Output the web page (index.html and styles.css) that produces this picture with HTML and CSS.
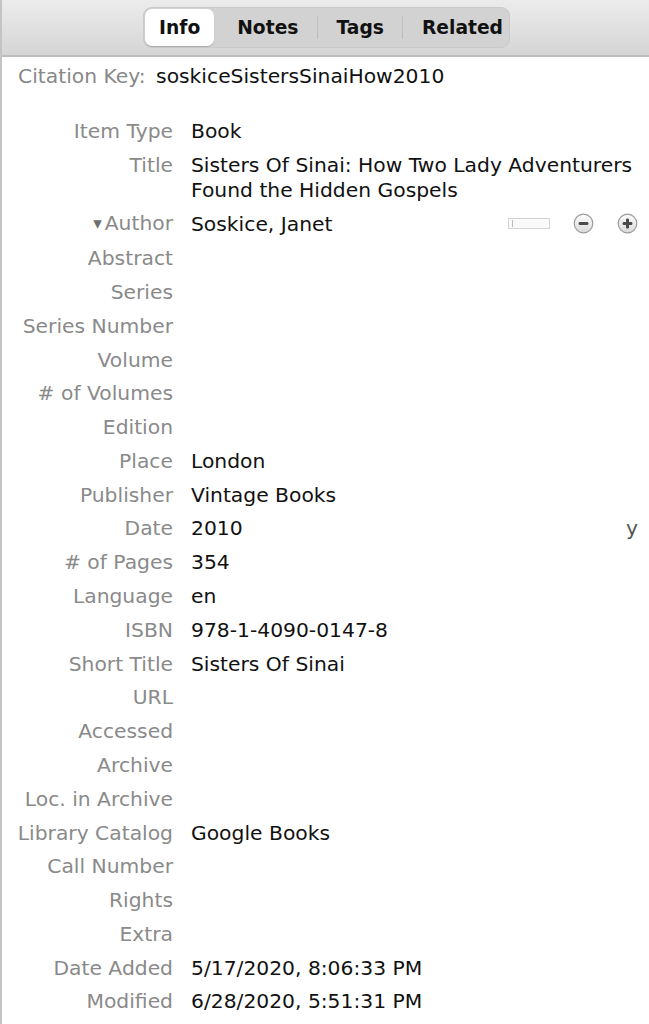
FILE: index.html
```html
<!DOCTYPE html>
<html lang="en">
<head>
    <meta charset="UTF-8">
    <title>Item Pane</title>
    <link rel="stylesheet" href="styles.css">
</head>
<body>
    <div class="pane">
        <div class="toolbar">
            <div class="tabs">
                <span class="tab active">Info</span>
                <span class="tab notes">Notes</span>
                <span class="sep"></span>
                <span class="tab">Tags</span>
                <span class="sep"></span>
                <span class="tab last">Related</span>
            </div>
        </div>
        <div class="citekey">
            <span class="ck-label">Citation Key:</span>
            <span class="ck-value">soskiceSistersSinaiHow2010</span>
        </div>
        <div class="fields">
            <div class="label">Item Type</div><div class="value">Book</div>
            <div class="label">Title</div><div class="value">Sisters Of Sinai: How Two Lady Adventurers Found the Hidden Gospels</div>
            <div class="label"><span class="twisty">&#9662;</span>Author</div>
            <div class="value creator">
                <span>Soskice, Janet</span>
                <span class="creator-tools">
                    <span class="mini-box"><span class="caret"></span></span>
                    <svg width="21" height="21" viewBox="0 0 21 21" class="btn-round minus">
                        <defs>
                            <linearGradient id="g1" x1="0" y1="0" x2="0" y2="1">
                                <stop offset="0" stop-color="#fdfdfd"/>
                                <stop offset="1" stop-color="#d9d9d9"/>
                            </linearGradient>
                        </defs>
                        <circle cx="10.5" cy="10.5" r="9.3" fill="url(#g1)" stroke="#9c9c9c" stroke-width="1.2"/>
                        <rect x="5.6" y="9" width="9.8" height="3" rx="1.2" fill="#4a4a4a"/>
                    </svg>
                    <svg width="21" height="21" viewBox="0 0 21 21" class="btn-round">
                        <circle cx="10.5" cy="10.5" r="9.3" fill="url(#g1)" stroke="#9c9c9c" stroke-width="1.2"/>
                        <rect x="5.6" y="9" width="9.8" height="3" rx="1.2" fill="#4a4a4a"/>
                        <rect x="9" y="5.6" width="3" height="9.8" rx="1.2" fill="#4a4a4a"/>
                    </svg>
                </span>
            </div>
            <div class="label">Abstract</div><div class="value"></div>
            <div class="label">Series</div><div class="value"></div>
            <div class="label">Series Number</div><div class="value"></div>
            <div class="label">Volume</div><div class="value"></div>
            <div class="label"># of Volumes</div><div class="value"></div>
            <div class="label">Edition</div><div class="value"></div>
            <div class="label">Place</div><div class="value">London</div>
            <div class="label">Publisher</div><div class="value">Vintage Books</div>
            <div class="label">Date</div><div class="value date"><span>2010</span><span class="ymd">y</span></div>
            <div class="label"># of Pages</div><div class="value">354</div>
            <div class="label">Language</div><div class="value">en</div>
            <div class="label">ISBN</div><div class="value">978-1-4090-0147-8</div>
            <div class="label">Short Title</div><div class="value">Sisters Of Sinai</div>
            <div class="label">URL</div><div class="value"></div>
            <div class="label">Accessed</div><div class="value"></div>
            <div class="label">Archive</div><div class="value"></div>
            <div class="label">Loc. in Archive</div><div class="value"></div>
            <div class="label">Library Catalog</div><div class="value">Google Books</div>
            <div class="label">Call Number</div><div class="value"></div>
            <div class="label">Rights</div><div class="value"></div>
            <div class="label">Extra</div><div class="value"></div>
            <div class="label">Date Added</div><div class="value">5/17/2020, 8:06:33 PM</div>
            <div class="label">Modified</div><div class="value">6/28/2020, 5:51:31 PM</div>
        </div>
    </div>
</body>
</html>
```

FILE: styles.css
```css
body { margin: 0; background: #fff; font-family: "DejaVu Sans", Verdana, sans-serif; }
.pane { min-height: 1024px; border-left: 2px solid #c4c4c4; box-sizing: border-box; }

/* toolbar with segmented tabs */
.toolbar {
    height: 55px; border-bottom: 2px solid #bdbdbd;
    background: linear-gradient(#ececec, #d5d5d5);
    display: flex; justify-content: center; align-items: flex-start;
}
.tabs {
    margin-top: 7px; margin-left: 2px; height: 41px; display: flex; align-items: center;
    background: #d2d2d2; border-radius: 9px; padding: 0 2px;
    box-shadow: inset 0 0 0 1px #cacaca;
}
.tab { font-size: 18.7px; font-weight: bold; color: #111; padding: 0 18.5px; line-height: 37px; }
.tab.active { background: #fff; border-radius: 7px; padding: 0 14px 0 14px; box-shadow: 0 1px 1px #aaa; }
.tab.notes { padding-left: 23px; }
.tab.last { padding-right: 5px; }
.sep { width: 1px; height: 23px; background: #bcbcbc; }

/* citation key */
.citekey { font-size: 20.3px; padding: 4px 0 0 16px; line-height: 30px; }
.ck-label { color: #888; margin-right: 4px; }
.ck-value { color: #111; }

/* field grid */
.fields {
    display: grid; grid-template-columns: 171px 1fr; column-gap: 18px;
    margin-top: 23.5px; font-size: 20.3px; line-height: 25px;
}
.label, .value { padding: 4.4px 0; }
.label { text-align: right; color: #8a8a8a; white-space: nowrap; }
.value { color: #111; padding-right: 8px; }
.twisty { font-size: 17px; color: #6f6f6f; margin-right: 3px; position: relative; top: -1px; }
.creator, .date { display: flex; justify-content: space-between; align-items: center; }
.creator-tools { display: flex; align-items: center; margin-top: -2px; padding-right: 3px; }
.mini-box {
    width: 37px; height: 9px; border: 1px solid #d4d4d4; background: #fafafa;
    margin-right: 23px; display: flex; align-items: center; padding-left: 3px;
}
.caret { width: 1px; height: 7px; background: #bbb; }
.btn-round { display: block; }
.btn-round.minus { margin-right: 23px; }
.ymd { color: #555; padding-right: 3px; }
```
